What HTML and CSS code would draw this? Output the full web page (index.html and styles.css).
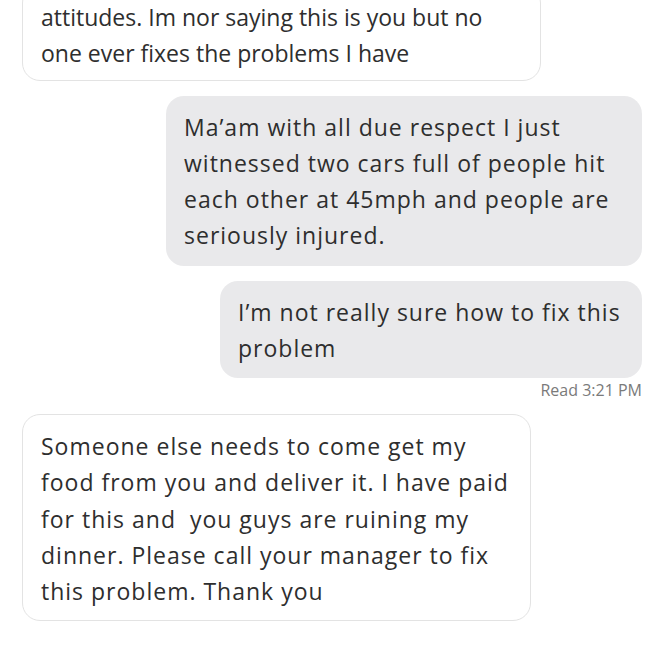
FILE: index.html
```html
<!DOCTYPE html>
<html lang="en">
<head>
<meta charset="UTF-8">
<meta name="viewport" content="width=device-width, initial-scale=1.0">
<title>Chat</title>
<link rel="stylesheet" href="styles.css">
</head>
<body>
<div class="chat">
  <div class="bubble them first w1">attitudes. Im nor saying this is you but no one ever fixes the problems I have</div>
  <div class="bubble me w2">Ma’am with all due respect I just witnessed two cars full of people hit each other at 45mph and people are seriously injured.</div>
  <div class="bubble me w3">I’m not really sure how to fix this problem</div>
  <div class="status">Read 3:21 PM</div>
  <div class="bubble them w4">Someone else needs to come get my food from you and deliver it. I have paid for this and&nbsp; you guys are ruining my dinner. Please call your manager to fix this problem. Thank you</div>
</div>
</body>
</html>
```

FILE: styles.css
```css
body {
  margin: 0;
  background: #fff;
  font-family: "Open Sans", "Liberation Sans", sans-serif;
  color: #2e2e2e;
}

.chat {
  display: flex;
  flex-direction: column;
  padding: 0 26px 0 22px;
}

.bubble {
  box-sizing: border-box;
  font-size: 23px;
  letter-spacing: 1px;
  line-height: 36.25px;
  padding: 13px 18px 12px 18px;
  border-radius: 18px;
  margin-bottom: 15px;
}

.them {
  align-self: flex-start;
  background: #fff;
  border: 1px solid #e3e3e3;
}

.me {
  align-self: flex-end;
  background: #e9e9eb;
}

/* cut off at the top of the view, text a bit tighter */
.first {
  margin-top: -15px;
  padding-bottom: 8px;
  letter-spacing: 0;
}

.w1 { width: 519px; }
.w2 { width: 476px; }
.w3 { width: 422px; }
.w4 { width: 509px; padding-bottom: 11px; }

.status {
  align-self: flex-end;
  font-size: 16px;
  line-height: 20px;
  color: #7a7a7a;
  margin-top: -13px;
  margin-bottom: 14px;
}
```
